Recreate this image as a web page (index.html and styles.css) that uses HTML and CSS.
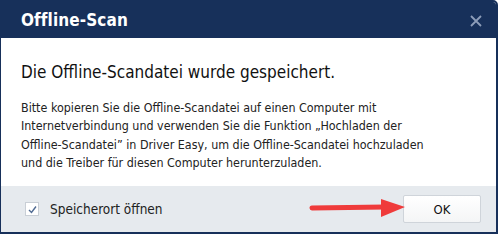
FILE: index.html
```html
<!DOCTYPE html>
<html lang="de">
<head>
<meta charset="utf-8">
<title>Offline-Scan</title>
<link rel="stylesheet" href="styles.css">
</head>
<body>
<div class="dialog">
  <div class="titlebar">
    <span class="title">Offline-Scan</span>
    <span class="close" aria-label="Schließen">
      <svg width="12" height="12" viewBox="0 0 12 12"><path d="M1 1 L11 11 M11 1 L1 11" stroke="#8d9db9" stroke-width="1.8" fill="none"/></svg>
    </span>
  </div>
  <div class="content">
    <h1 class="heading">Die Offline-Scandatei wurde gespeichert.</h1>
    <p class="text">Bitte kopieren Sie die Offline-Scandatei auf einen Computer mit<br>Internetverbindung und verwenden Sie die Funktion „Hochladen der<br>Offline-Scandatei” in Driver Easy, um die Offline-Scandatei hochzuladen<br>und die Treiber für diesen Computer herunterzuladen.</p>
  </div>
  <div class="footer">
    <label class="check">
      <span class="box">
        <svg width="11" height="11" viewBox="0 0 11 11"><path d="M2 6 L4.5 8.5 L9 2.5" stroke="#4f6a92" stroke-width="1.4" fill="none"/></svg>
      </span>
      <span class="label">Speicherort öffnen</span>
    </label>
    <button class="ok">OK</button>
    <svg class="arrow" width="100" height="24" viewBox="0 0 100 24">
      <path d="M3 12 L76 11" stroke="#ef3b3b" stroke-width="5" stroke-linecap="round" fill="none"/>
      <path d="M72 3 L96 11 L72 21 Z" fill="#ef3b3b"/>
    </svg>
  </div>
</div>
</body>
</html>
```

FILE: styles.css
```css
html, body {
  margin: 0;
  padding: 0;
  background: #ffffff;
}
body {
  width: 500px;
  height: 235px;
  overflow: hidden;
  font-family: "DejaVu Sans Condensed", "DejaVu Sans", sans-serif;
}
.dialog {
  width: 495px;
  height: 230px;
  border: 2px solid #17305a;
  border-top-right-radius: 5px;
  border-left-width: 1px;
  background: #ffffff;
  display: flex;
  flex-direction: column;
  position: relative;
}
.titlebar {
  height: 36px;
  background: #17305a;
  display: flex;
  align-items: center;
  justify-content: space-between;
  padding: 0 14px 0 20px;
  border-top-right-radius: 3px;
}
.title {
  color: #ffffff;
  font-weight: bold;
  font-size: 17px;
  letter-spacing: 0.1px;
}
.close {
  display: flex;
  align-items: center;
  margin-top: 2px;
}
.content {
  flex: 1;
  padding: 23px 20px 0 20px;
}
.heading {
  margin: 0 0 16px 0;
  font-weight: normal;
  font-size: 17px;
  color: #111111;
  line-height: 22px;
}
.text {
  margin: 0;
  font-size: 12.4px;
  line-height: 18.3px;
  color: #222222;
  white-space: nowrap;
}
.footer {
  height: 46px;
  background: #e6eaee;
  display: flex;
  align-items: center;
  justify-content: space-between;
  padding: 0 15px 0 24px;
  position: relative;
}
.check {
  display: flex;
  align-items: center;
  gap: 11px;
  font-size: 13.5px;
  color: #222222;
}
.box {
  width: 12px;
  height: 12px;
  border: 1px solid #c9cfd6;
  background: #ffffff;
  display: flex;
  align-items: center;
  justify-content: center;
}
.ok {
  width: 78px;
  height: 28px;
  border: 1px solid #cfd4da;
  border-radius: 2px;
  background: linear-gradient(#ffffff, #f4f5f6);
  font-family: inherit;
  font-size: 13px;
  color: #111111;
  padding: 0;
}
.arrow {
  position: absolute;
  left: 308px;
  top: 10px;
}
```
